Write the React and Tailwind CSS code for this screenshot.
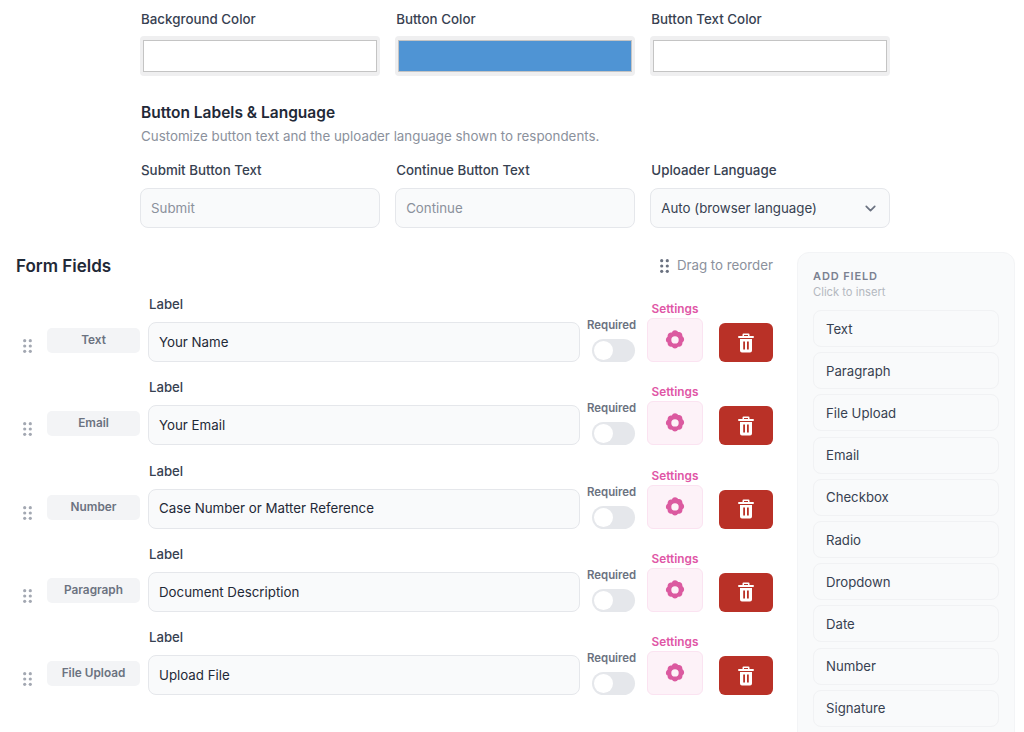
import { ChevronDown } from 'lucide-react'

const fields = [
  { type: 'Text', label: 'Your Name' },
  { type: 'Email', label: 'Your Email' },
  { type: 'Number', label: 'Case Number or Matter Reference' },
  { type: 'Paragraph', label: 'Document Description' },
  { type: 'File Upload', label: 'Upload File' },
]

const addable = ['Text', 'Paragraph', 'File Upload', 'Email', 'Checkbox', 'Radio', 'Dropdown', 'Date', 'Number', 'Signature']

function Swatch({ label, color }) {
  return (
    <div>
      <div className="h-[20px] pl-[1px] text-[13.35px] leading-[20px] font-medium text-[#374151] mb-[7px]">{label}</div>
      <div className="h-[40px] rounded-[4px] bg-[#efeff0] px-[3px] py-[4px]">
        <div className={`h-full border-[1.5px] border-[#c4c4c4] ${color}`} />
      </div>
    </div>
  )
}

function TextBox({ label, placeholder }) {
  return (
    <div>
      <div className="h-[20px] pl-[1px] text-[13.35px] leading-[20px] font-medium text-[#374151] mb-[8px]">{label}</div>
      <div className="h-[40px] px-[10px] pt-[1px] flex items-center rounded-[8px] border border-[#e5e7eb] bg-[#f9fafb] text-[13.3px] text-[#8b919c]">{placeholder}</div>
    </div>
  )
}

function Grip({ className }) {
  return (
    <svg width="9" height="14" viewBox="0 0 9 14" fill="currentColor" className={className}>
      <circle cx="1.7" cy="1.7" r="1.6" />
      <circle cx="7.3" cy="1.7" r="1.6" />
      <circle cx="1.7" cy="7" r="1.6" />
      <circle cx="7.3" cy="7" r="1.6" />
      <circle cx="1.7" cy="12.3" r="1.6" />
      <circle cx="7.3" cy="12.3" r="1.6" />
    </svg>
  )
}

function Gear() {
  return (
    <svg width="20" height="20" viewBox="0 0 20 20" fill="#db5aa0">
      <path
        fillRule="evenodd"
        d="M10 .4c1.500 0 2.400.9 3.100 1.700 1-.1 2.300.1 3.300 1 .9 1 1.100 2.300 1 3.300.8.700 1.700 1.600 1.700 3.100s-.9 2.400-1.700 3.100c.1 1-.1 2.300-1 3.300-1 .9-2.300 1.100-3.300 1-.7.8-1.600 1.700-3.100 1.700s-2.400-.9-3.100-1.700c-1 .1-2.300-.1-3.300-1-.9-1-1.100-2.300-1-3.300C1.800 12.400.9 11.500.9 10s.9-2.400 1.700-3.100c-.1-1 .1-2.300 1-3.300 1-.9 2.300-1.100 3.300-1C7.600 1.300 8.500.4 10 .4zM10 6.300a3.700 3.700 0 1 0 0 7.400 3.700 3.700 0 0 0 0-7.400z"
        transform="translate(0 -.1)"
      />
    </svg>
  )
}

function TrashSolid() {
  return (
    <svg width="16" height="20" viewBox="0 0 16 20" fill="#fff">
      <path
        fillRule="evenodd"
        d="M5.500.5h5a1 1 0 0 1 1 1V3H15a1 1 0 0 1 0 2H1a1 1 0 0 1 0-2h3.500V1.500a1 1 0 0 1 1-1zM6 2v1h4V2H6zM2 6h12v11.500a2 2 0 0 1-2 2H4a2 2 0 0 1-2-2V6zm3.200 2.500v8h1.800v-8H5.200zm3.800 0v8h1.800v-8H9z"
      />
    </svg>
  )
}

function FieldRow({ type, label }) {
  return (
    <div className="h-[65px] flex items-end">
      <div className="w-[31px] pl-[7px] pb-[9px] text-[#a3a8b2]">
        <Grip />
      </div>
      <div className="w-[93px] h-[25px] mb-[9px] pt-[1px] rounded-[5px] bg-[#f3f4f6] flex items-center justify-center text-[11.8px] font-semibold text-[#6b7280]">{type}</div>
      <div className="w-[432px] ml-[8px]">
        <div className="h-[18px] pl-[1px] text-[13.2px] leading-[18px] font-medium text-[#374151] mb-[9px]">Label</div>
        <div className="h-[40px] px-[10px] pt-[1px] flex items-center rounded-[8px] border border-[#e5e7eb] bg-[#f9fafb] text-[13.3px] text-[#1f2937]">{label}</div>
      </div>
      <div className="w-[53px] ml-[7px] flex flex-col">
        <div className="text-[11.4px] leading-[14px] font-semibold text-[#6b7280] mb-[7px]">Required</div>
        <div className="w-[43px] h-[23px] ml-[5px] rounded-full bg-[#e5e7eb] p-[2px]">
          <div className="w-[19px] h-[19px] rounded-full bg-white" />
        </div>
      </div>
      <div className="w-[56px] ml-[7px] flex flex-col items-center">
        <div className="text-[11.8px] leading-[14px] font-semibold text-[#e056a6] mb-[2px]">Settings</div>
        <div className="w-[56px] h-[44px] rounded-[6px] border border-[#fbe3f1] bg-[#fdf2f8] flex items-center justify-center">
          <Gear />
        </div>
      </div>
      <div className="w-[54px] h-[39px] ml-[16px] rounded-[6px] bg-[#b93127] flex items-center justify-center">
        <TrashSolid />
      </div>
    </div>
  )
}

export default function App() {
  return (
    <div className="w-[1024px] h-[732px] overflow-hidden bg-white font-['Inter',sans-serif]">
      <div className="pl-[140px] pt-[9px] w-[890px]">
        <div className="grid grid-cols-3 gap-x-[15.5px]">
          <Swatch label="Background Color" color="bg-white" />
          <Swatch label="Button Color" color="bg-[#4f94d4]" />
          <Swatch label="Button Text Color" color="bg-white" />
        </div>
        <h3 className="mt-[26px] h-[22px] pl-[1px] text-[15.5px] leading-[22px] font-semibold text-[#1f2937]">Button Labels &amp; Language</h3>
        <p className="mt-[2px] h-[20px] pl-[1px] text-[13.35px] leading-[20px] text-[#8b919c]">Customize button text and the uploader language shown to respondents.</p>
        <div className="mt-[14px] grid grid-cols-3 gap-x-[15.5px]">
          <TextBox label="Submit Button Text" placeholder="Submit" />
          <TextBox label="Continue Button Text" placeholder="Continue" />
          <div>
            <div className="h-[20px] pl-[1px] text-[13.35px] leading-[20px] font-medium text-[#374151] mb-[8px]">Uploader Language</div>
            <div className="h-[40px] px-[10px] pt-[1px] flex items-center justify-between rounded-[8px] border border-[#e5e7eb] bg-[#f9fafb] text-[13.3px] text-[#374151]">
              Auto (browser language)
              <ChevronDown size={17} strokeWidth={2.4} className="text-[#6b7280]" />
            </div>
          </div>
        </div>
      </div>

      <div className="mt-[24px] pl-[16px] flex items-start">
        <div className="w-[757px]">
          <div className="h-[28px] flex items-center justify-between">
            <h2 className="pt-[2px] text-[17px] font-semibold text-[#1f2937]">Form Fields</h2>
            <div className="flex items-center gap-[8px] text-[13.3px] text-[#8b919c]">
              <Grip className="text-[#6b7280]" />
              Drag to reorder
            </div>
          </div>
          <div className="mt-[17px] flex flex-col gap-[18.33px]">
            {fields.map(f => <FieldRow key={f.type} {...f} />)}
          </div>
        </div>
        <aside className="w-[218px] ml-[24px] h-[520px] rounded-t-[12px] border border-[#f3f4f6] bg-[#f9fafb] px-[15px] pt-[16px]">
          <div className="text-[11px] leading-[14px] font-semibold tracking-[0.08em] text-[#7b8190]">ADD FIELD</div>
          <div className="mt-[2px] text-[11.2px] leading-[14px] text-[#b4b8c0]">Click to insert</div>
          <div className="mt-[11px] flex flex-col gap-[5.2px]">
            {addable.map(a => (
              <div key={a} className="h-[37px] px-[12px] pt-[2px] flex items-center rounded-[8px] border border-[#f1f2f4] bg-[#f9fafb] text-[13.2px] text-[#374151]">{a}</div>
            ))}
          </div>
        </aside>
      </div>
    </div>
  )
}
